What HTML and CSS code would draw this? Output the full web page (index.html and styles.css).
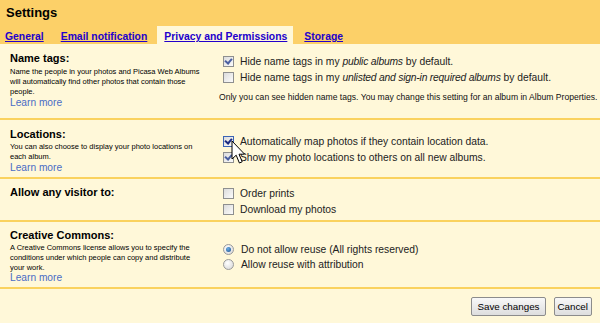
FILE: index.html
```html
<!DOCTYPE html>
<html lang="en">
<head>
    <meta charset="UTF-8">
    <title>Settings</title>
    <link rel="stylesheet" href="styles.css">
</head>
<body>
    <header class="top">
        <h1>Settings</h1>
        <nav class="tabs">
            <a href="#" class="tab">General</a>
            <a href="#" class="tab">Email notification</a>
            <a href="#" class="tab active">Privacy and Permissions</a>
            <a href="#" class="tab">Storage</a>
        </nav>
    </header>

    <div class="rows">
        <div class="row row-names">
            <div class="info">
                <h2>Name tags:</h2>
                <p>Name the people in your photos and Picasa Web Albums will automatically find other photos that contain those people.</p>
                <a href="#" class="learn">Learn more</a>
            </div>
            <div class="opts">
                <label class="opt"><span class="box checked"></span>Hide name tags in my&nbsp;<em>public albums</em>&nbsp;by default.</label>
                <label class="opt"><span class="box"></span>Hide name tags in my&nbsp;<em>unlisted and sign-in required albums</em>&nbsp;by default.</label>
                <div class="note">Only you can see hidden name tags. You may change this setting for an album in Album Properties.</div>
            </div>
        </div>

        <div class="row row-loc">
            <div class="info">
                <h2>Locations:</h2>
                <p>You can also choose to display your photo locations on each album.</p>
                <a href="#" class="learn">Learn more</a>
            </div>
            <div class="opts">
                <label class="opt"><span class="box checked dark"></span>Automatically map photos if they contain location data.</label>
                <label class="opt"><span class="box checked"></span>Show my photo locations to others on all new albums.</label>
                <svg class="cursor" width="15" height="26" viewBox="0 0 15 26">
                    <path d="M1 1 L1 19 L5.2 15.2 L8.4 23 L11.2 21.8 L8 14.2 L13.6 14.2 Z" fill="#fff" stroke="#000" stroke-width="1" stroke-linejoin="round"/>
                </svg>
            </div>
        </div>

        <div class="row row-visitor">
            <div class="info">
                <h2>Allow any visitor to:</h2>
            </div>
            <div class="opts">
                <label class="opt"><span class="box"></span>Order prints</label>
                <label class="opt"><span class="box"></span>Download my photos</label>
            </div>
        </div>

        <div class="row row-cc">
            <div class="info">
                <h2>Creative Commons:</h2>
                <p>A Creative Commons license allows you to specify the conditions under which people can copy and distribute your work.</p>
                <a href="#" class="learn">Learn more</a>
            </div>
            <div class="opts">
                <label class="opt"><span class="radio on"></span>Do not allow reuse (All rights reserved)</label>
                <label class="opt"><span class="radio"></span>Allow reuse with attribution</label>
            </div>
        </div>
    </div>

    <div class="actions">
        <button class="btn">Save changes</button>
        <button class="btn btn-small">Cancel</button>
    </div>
</body>
</html>
```

FILE: styles.css
```css
body {
    margin: 0;
    width: 600px;
    height: 323px;
    overflow: hidden;
    background-color: #fff8d9;
    font-family: 'Liberation Sans', Arial, sans-serif;
    color: #000;
}
.top {
    background-color: #fcd068;
    height: 44px;
    display: flex;
    flex-direction: column;
    justify-content: space-between;
}
.top h1 {
    margin: 0;
    padding: 5px 0 0 6px;
    font-size: 13px;
    line-height: 15px;
}
.tabs {
    display: flex;
    align-items: flex-end;
}
.tab {
    color: #2200cc;
    font-weight: bold;
    font-size: 10.4px;
    line-height: 12px;
    padding: 5px 0 1px;
}
.tab:nth-child(1) { margin-left: 5px; }
.tab:nth-child(2) { margin-left: 17px; }
.tab.active {
    background-color: #fff8d9;
    margin-left: 10px;
    padding: 5px 6px 1px 7px;
}
.tab:nth-child(4) { margin-left: 11px; }
.rows {
    display: flex;
    flex-direction: column;
}
.row {
    display: grid;
    grid-template-columns: 213px 1fr;
    border-bottom: 2px solid #fad25e;
    padding: 8px 0 0 10px;
    box-sizing: border-box;
}
.row-names { height: 76px; }
.row-loc { height: 59px; padding-top: 8px; }
.row-visitor { height: 43px; padding-top: 7px; }
.row-cc { height: 67px; padding-top: 7px; }
.info h2 {
    margin: 0;
    font-size: 11px;
    line-height: 13px;
    font-weight: bold;
}
.info p {
    margin: 2px 0 0;
    font-size: 7.5px;
    line-height: 10px;
    width: 192px;
    color: #000;
}
.row-loc .info p { margin-top: 1px; }
.row-cc .info p { margin-top: 1px; line-height: 9.8px; }
.learn {
    display: block;
    color: #4a6cc6;
    font-size: 10.2px;
    line-height: 12px;
    text-decoration: none;
}
.opts {
    position: relative;
    font-size: 10.3px;
}
.opts em {
    letter-spacing: -0.2px;
}
.row-names .opts { padding-top: 2px; }
.row-loc .opts { padding-top: 6px; }
.row-visitor .opts { padding-top: 0; }
.row-cc .opts { padding-top: 13px; }
.opt {
    display: flex;
    align-items: center;
    height: 15.5px;
    color: #222;
}
.row-cc .opt { height: 15px; }
.box {
    width: 9px;
    height: 9px;
    margin-right: 6px;
    border: 1px solid #8e8f8f;
    background: linear-gradient(135deg, #dcdcdc, #fbfbfb);
    flex: none;
    position: relative;
}
.box.checked::after {
    content: "";
    position: absolute;
    left: 2px;
    top: 0;
    width: 3px;
    height: 5px;
    border-right: 2px solid #4a5fa0;
    border-bottom: 2px solid #4a5fa0;
    transform: rotate(40deg);
}
.box.dark {
    border-color: #3c64b4;
}
.box.dark.checked::after {
    border-color: #1a2a80;
}
.radio {
    width: 9px;
    height: 9px;
    margin-right: 7px;
    border-radius: 50%;
    border: 1px solid #9a9a9a;
    background: radial-gradient(circle at 40% 35%, #ffffff, #d4d4d4);
    flex: none;
    position: relative;
}
.radio.on::after {
    content: "";
    position: absolute;
    left: 2px;
    top: 2px;
    width: 5px;
    height: 5px;
    border-radius: 50%;
    background: radial-gradient(circle at 40% 35%, #6ab0e8, #1a4a88);
}
.note {
    font-size: 8.6px;
    margin-top: 7px;
    margin-left: -4px;
    color: #111;
    white-space: nowrap;
}
.cursor {
    position: absolute;
    left: 8px;
    top: 12px;
}
.actions {
    display: flex;
    justify-content: flex-end;
    gap: 8px;
    padding: 8px 8px 0 0;
}
.btn {
    font-family: 'Liberation Sans', Arial, sans-serif;
    font-size: 9.8px;
    height: 19px;
    padding: 0 5px;
    border: 1px solid #8c8c8c;
    border-radius: 2px;
    background: linear-gradient(#f8f8f8, #dedede);
    color: #000;
}
.btn-small {
    padding: 0 3px;
}
```
